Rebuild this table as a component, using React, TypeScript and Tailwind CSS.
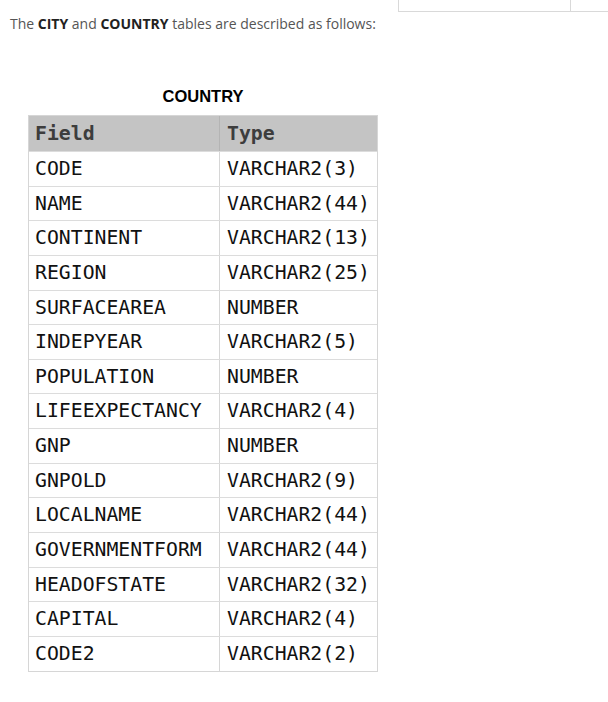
import React from "react";

type Column = {
  field: string;
  type: string;
};

const columns: Column[] = [
  { field: "CODE", type: "VARCHAR2(3)" },
  { field: "NAME", type: "VARCHAR2(44)" },
  { field: "CONTINENT", type: "VARCHAR2(13)" },
  { field: "REGION", type: "VARCHAR2(25)" },
  { field: "SURFACEAREA", type: "NUMBER" },
  { field: "INDEPYEAR", type: "VARCHAR2(5)" },
  { field: "POPULATION", type: "NUMBER" },
  { field: "LIFEEXPECTANCY", type: "VARCHAR2(4)" },
  { field: "GNP", type: "NUMBER" },
  { field: "GNPOLD", type: "VARCHAR2(9)" },
  { field: "LOCALNAME", type: "VARCHAR2(44)" },
  { field: "GOVERNMENTFORM", type: "VARCHAR2(44)" },
  { field: "HEADOFSTATE", type: "VARCHAR2(32)" },
  { field: "CAPITAL", type: "VARCHAR2(4)" },
  { field: "CODE2", type: "VARCHAR2(2)" },
];

const mono = "font-['DejaVu_Sans_Mono',monospace]";

const App = () => {
  return (
    <div className="min-h-[702px] w-[608px] bg-white">
      {/* tail of the previous table */}
      <div className="flex justify-end">
        <div className="flex h-[12px] w-[210px] border-b border-l border-[#d9d9d9]">
          <div className="w-[172px] border-r border-[#d9d9d9]" />
        </div>
      </div>

      <p className="mt-[2px] pl-[10px] font-['Open_Sans',sans-serif] text-[14px] leading-[20px] text-[#555]">
        The <b className="text-[#222]">CITY</b> and <b className="text-[#222]">COUNTRY</b> tables are described as follows:
      </p>

      <div className="ml-[28px] mt-[52px] w-[350px]">
        <div className="text-center font-['Liberation_Sans',sans-serif] text-[16.5px] font-bold leading-[20px] text-black">
          COUNTRY
        </div>

        <div className="mt-[9px] border border-[#d6d6d6]">
          <div className={`grid h-[35px] grid-cols-[191px_1fr] bg-[#c4c4c4] text-[19.8px] font-bold text-[#3d3d3d] ${mono}`}>
            <div className="flex items-center border-r border-[#b4b4b4] pl-[6px]">Field</div>
            <div className="flex items-center pl-[7px]">Type</div>
          </div>
          {columns.map((col) => (
            <div
              key={col.field}
              className={`grid h-[34.65px] grid-cols-[191px_1fr] border-t border-[#dcdcdc] text-[19.8px] text-[#111] ${mono}`}
            >
              <div className="flex items-center border-r border-[#d6d6d6] pl-[6px]">{col.field}</div>
              <div className="flex items-center pl-[7px]">{col.type}</div>
            </div>
          ))}
        </div>
      </div>
    </div>
  );
};

export default App;
